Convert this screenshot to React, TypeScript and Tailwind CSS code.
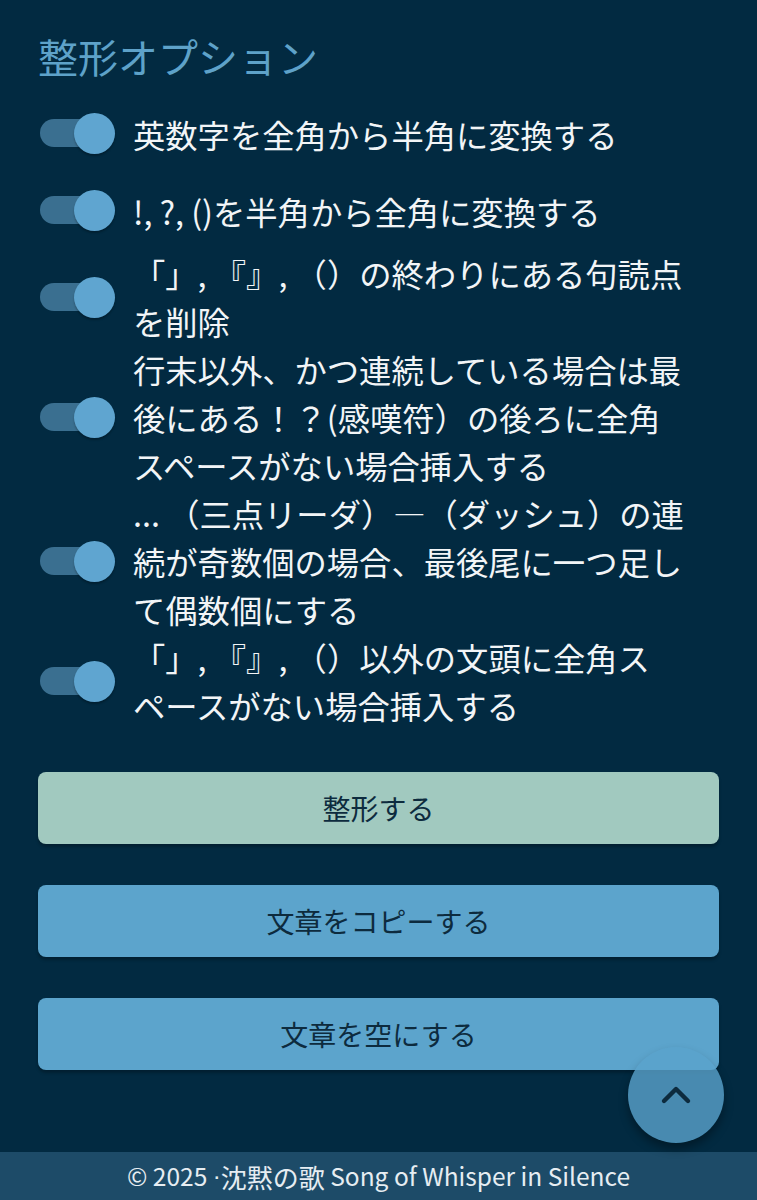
import { ChevronUp } from "lucide-react"

const options = [
  { id: "alnum", label: "英数字を全角から半角に変換する" },
  { id: "symbol", label: "!, ?, ()を半角から全角に変換する" },
  { id: "punct", label: "「」, 『』, （）の終わりにある句読点を削除" },
  { id: "space", label: "行末以外、かつ連続している場合は最後にある！？(感嘆符）の後ろに全角スペースがない場合挿入する" },
  { id: "dash", label: "... （三点リーダ）—（ダッシュ）の連続が奇数個の場合、最後尾に一つ足して偶数個にする" },
  { id: "indent", label: "「」, 『』, （）以外の文頭に全角スペースがない場合挿入する" },
]

function Toggle() {
  return (
    <div className="relative h-[77px] w-[95px] shrink-0">
      <div className="absolute left-[2px] top-[24px] h-[28px] w-[68px] rounded-full bg-[#3a6f90]" />
      <div className="absolute left-[36px] top-[18px] h-[41px] w-[41px] rounded-full bg-[#5fa5d0] shadow-[0_2px_2px_rgba(0,0,0,0.25)]" />
    </div>
  )
}

export default function App() {
  return (
    <div
      lang="ja"
      className="flex min-h-[1200px] flex-col bg-[#022a41] font-['Noto_Sans_CJK_JP',sans-serif]"
    >
      <main className="flex-1 px-[38px] pt-[32px]">
        {/* Options */}
        <h2 className="mb-[15px] text-[40px] leading-[48px] text-[#5ea2c9]">整形オプション</h2>
        <div className="flex flex-col">
          {options.map((option) => (
            <label key={option.id} className="flex items-center">
              <Toggle />
              <span className="w-[553px] text-[32.3px] leading-[48px] text-[#f2f5f7] [line-break:strict]">
                {option.label}
              </span>
            </label>
          ))}
        </div>

        {/* Actions */}
        <div className="mt-[43px] flex flex-col gap-[41px] pb-[70px]">
          <button className="h-[72px] rounded-[8px] bg-[#a1c9bf] text-[28px] text-[#0d2b3e] shadow-[0_3px_3px_rgba(0,0,0,0.25)]">
            整形する
          </button>
          <button className="h-[72px] rounded-[8px] bg-[#5ca4cc] text-[28px] text-[#0d2b3e] shadow-[0_3px_3px_rgba(0,0,0,0.25)]">
            文章をコピーする
          </button>
          <button className="h-[72px] rounded-[8px] bg-[#5ca4cc] text-[28px] text-[#0d2b3e] shadow-[0_3px_3px_rgba(0,0,0,0.25)]">
            文章を空にする
          </button>
        </div>
      </main>

      <footer className="flex h-[48px] items-center justify-center whitespace-pre bg-[#1d4b68] text-[26px] text-[#e6edf2]">
        <span className="text-[24.5px]">© 2025 </span>
        <span className="font-['Liberation_Sans',sans-serif] text-[24px]">·</span>
        <span>沈黙の歌</span>
        <span className="text-[24.5px]"> Song of Whisper in Silence</span>
      </footer>

      <button className="absolute left-[628px] top-[1047px] flex h-[96px] w-[96px] items-center justify-center rounded-full bg-[#5aa3cc]/80 shadow-[0_6px_10px_rgba(0,0,0,0.35)]">
        <ChevronUp size={48} strokeWidth={2.2} color="#0d2b3e" />
      </button>
    </div>
  )
}
